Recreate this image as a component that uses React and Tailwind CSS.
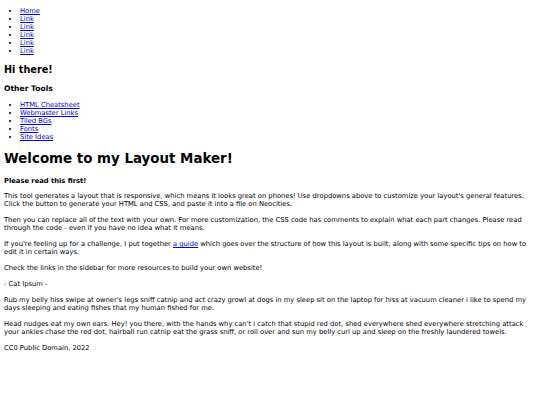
function L({ children }) {
  return (
    <li>
      <a href="#" className="text-[#0000ee] underline">{children}</a>
    </li>
  );
}

export default function App() {
  return (
    <div className="bg-white px-[4px] pb-[8px] font-['DejaVu_Sans','Verdana',sans-serif] text-[6.75px] leading-[8px] text-black">
      <ul className="mt-[7px] mb-0 list-disc pl-[16px]">
        <L>Home</L>
        <L>Link</L>
        <L>Link</L>
        <L>Link</L>
        <L>Link</L>
        <L>Link</L>
      </ul>
      <h2 className="mt-[9px] mb-0 text-[9.7px] leading-[1.164] font-bold">Hi there!</h2>
      <h3 className="mt-[9.6px] mb-0 text-[7.6px] leading-[1.164] font-bold">Other Tools</h3>
      <ul className="mt-[7px] mb-0 list-disc pl-[16px]">
        <L>HTML Cheatsheet</L>
        <L>Webmaster Links</L>
        <L>Tiled BGs</L>
        <L>Fonts</L>
        <L>Site Ideas</L>
      </ul>
      <h1 className="mt-[10.5px] mb-0 text-[13.4px] leading-[1.164] font-bold">Welcome to my Layout Maker!</h1>
      <p className="mt-[10px] mb-0 font-bold">Please read this first!</p>
      <div className="mt-[7.5px] flex flex-col gap-[8px]">
        <p>This tool generates a layout that is responsive, which means it looks great on phones! Use dropdowns above to customize your layout's general features. Click the button to generate your HTML and CSS, and paste it into a file on Neocities.</p>
        <p>Then you can replace all of the text with your own. For more customization, the CSS code has comments to explain what each part changes. Please read through the code - even if you have no idea what it means.</p>
        <p>If you're feeling up for a challenge, I put together <a href="#" className="text-[#0000ee] underline">a guide</a> which goes over the structure of how this layout is built, along with some specific tips on how to edit it in certain ways.</p>
        <p>Check the links in the sidebar for more resources to build your own website!</p>
        <p>- Cat Ipsum -</p>
        <p>Rub my belly hiss swipe at owner's legs sniff catnip and act crazy growl at dogs in my sleep sit on the laptop for hiss at vacuum cleaner i like to spend my days sleeping and eating fishes that my human fished for me.</p>
        <p>Head nudges eat my own ears. Hey! you there, with the hands why can't i catch that stupid red dot, shed everywhere shed everywhere stretching attack your ankles chase the red dot, hairball run catnip eat the grass sniff, or roll over and sun my belly curl up and sleep on the freshly laundered towels.</p>
        <p>CC0 Public Domain, 2022</p>
      </div>
    </div>
  );
}
